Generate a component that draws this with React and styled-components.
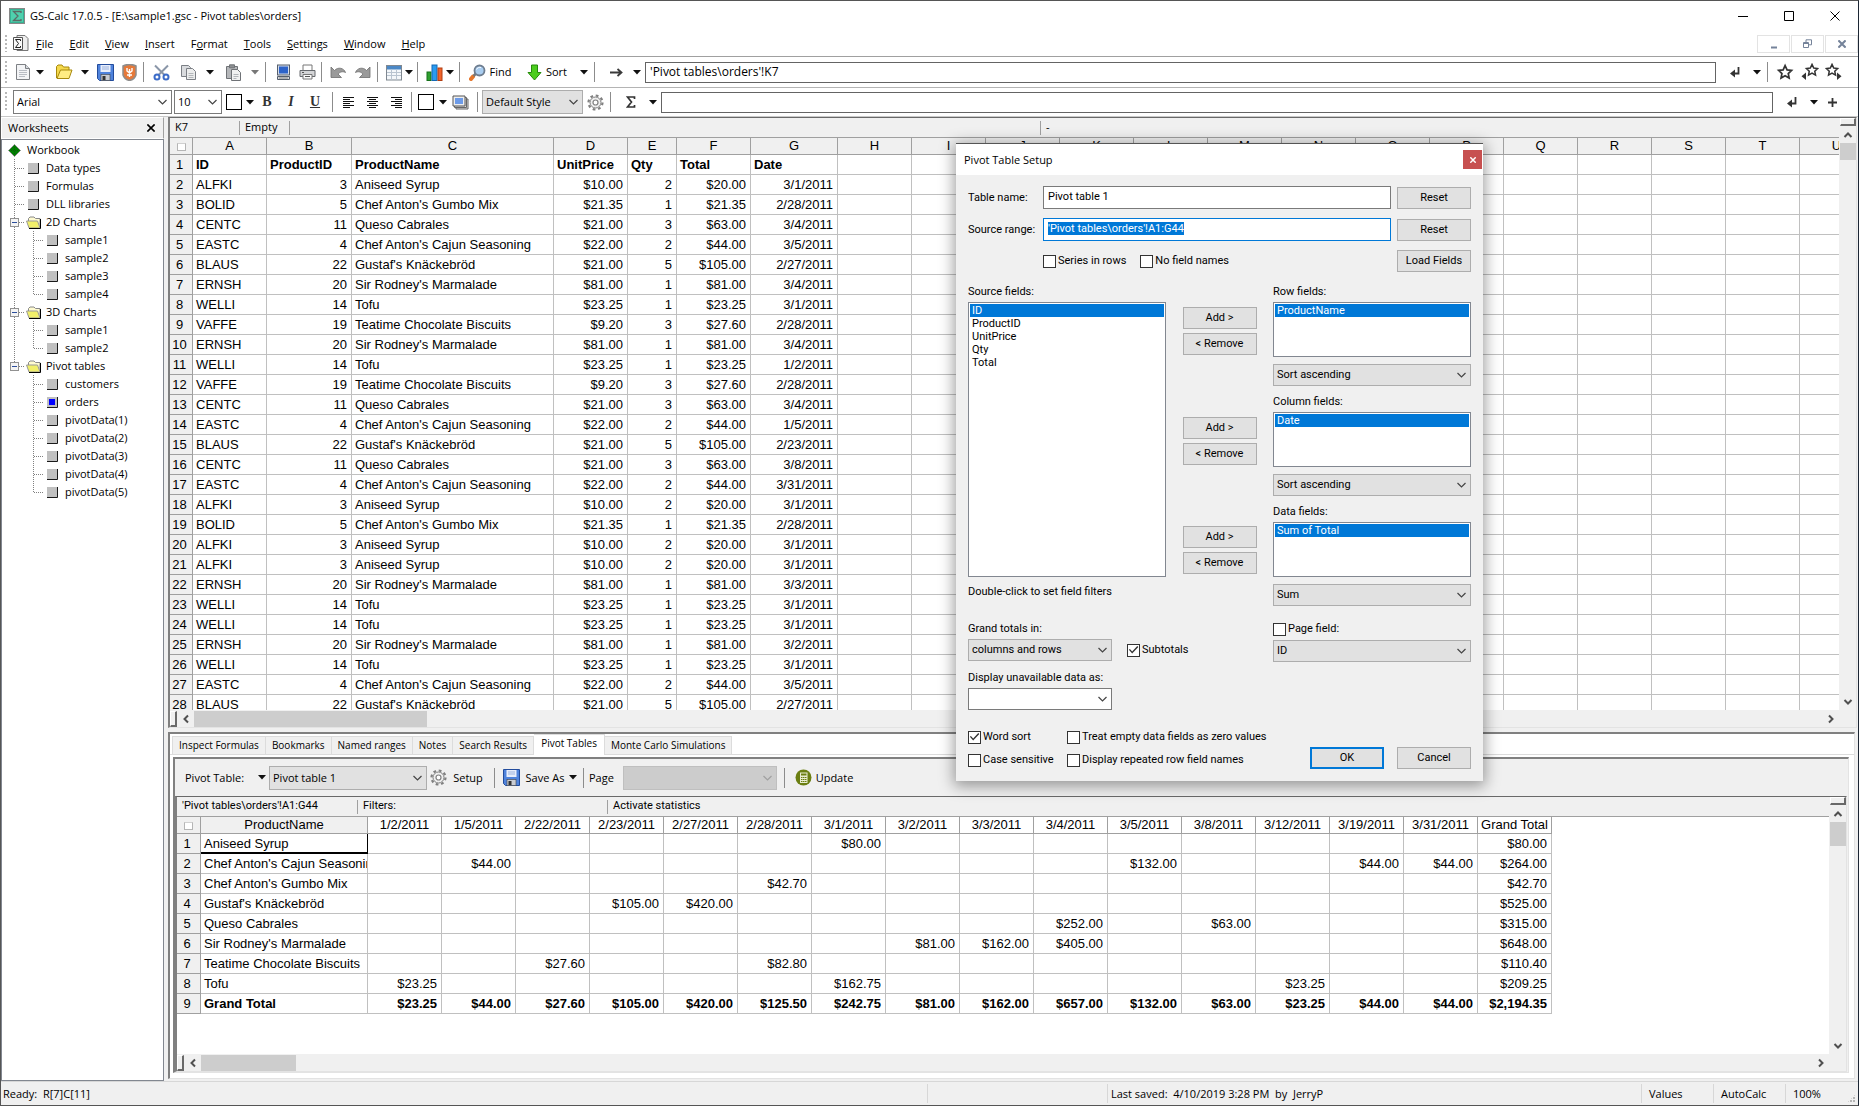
import React, { useEffect, useRef } from "react";
import styled, { createGlobalStyle, css } from "styled-components";

const face = "#f0f0f0";
const shadow = "#a0a0a0";
const dark = "#696969";
const accent = "#0078d7";
const uiFont = '"Open Sans", "Noto Sans", sans-serif';
const dialogFont = 'Roboto, "Open Sans", sans-serif';
const cellFont = '"Liberation Sans", Arial, sans-serif';

const Global = createGlobalStyle`
  *, *::before, *::after { box-sizing: border-box; }
  body { margin: 0; background: #fff; color: #000; }
  button, input, select { font: inherit; color: inherit; margin: 0; }
  svg { display: block; flex: none; }
`;

const Window = styled.div`
  position: relative;
  display: flex;
  flex-direction: column;
  height: 100vh;
  overflow: hidden;
  border: 1px solid #555;
  border-right-color: #1c2634;
  background: #fff;
  font: 11px/16px ${uiFont};
`;

/* ---------- title and menu ---------- */

const TitleBar = styled.header`
  display: flex;
  align-items: center;
  height: 30px;
  padding-left: 8px;
  flex: none;
`;
const WindowTitle = styled.h1`
  flex: 1;
  margin: 0 0 0 5px;
  font-size: 11px;
  font-weight: 400;
`;
const WindowButton = styled.button`
  display: grid;
  place-items: center;
  width: 46px;
  height: 28px;
  padding: 0;
  border: 0;
  background: none;
`;
const MenuBar = styled.nav`
  display: flex;
  align-items: center;
  height: 26px;
  flex: none;
  border-bottom: 1px solid ${shadow};
`;
const MenuIcon = styled.span`
  width: 15px;
`;
const MenuItem = styled.button`
  height: 20px;
  padding: 0 8px;
  border: 0;
  background: none;
`;
const Key = styled.u``;
const MdiButtons = styled.div`
  display: flex;
  gap: 1px;
  margin-left: auto;
`;
const MdiButton = styled.button`
  display: grid;
  place-items: center;
  width: 33px;
  height: 18px;
  padding: 0;
  border: 1px solid #e3e3e3;
  background: #fff;
`;

/* ---------- toolbars ---------- */

const Toolbar = styled.div`
  display: flex;
  align-items: center;
  flex: none;
  height: ${(p) => p.$h}px;
  padding-right: 12px;
  border-bottom: 1px solid ${(p) => (p.$soft ? "#c8c8c8" : "#b4b4b4")};
`;
const Grip = styled.span`
  align-self: stretch;
  width: 12px;
  margin: 4px 0;
  background: repeating-linear-gradient(#b8b8b8 0 2px, transparent 2px 4px) 4px 0 / 2px 100% no-repeat;
`;
const Tool = styled.button`
  display: flex;
  align-items: center;
  justify-content: center;
  gap: 4px;
  flex: none;
  width: ${(p) => p.$w}px;
  height: 22px;
  padding: 0;
  border: 0;
  background: none;
  white-space: nowrap;
`;
const Separator = styled.span`
  flex: none;
  width: ${(p) => p.$w}px;
  height: 20px;
  background: linear-gradient(#8c8c8c, #8c8c8c) center / 1px 100% no-repeat;
`;
const Bar = styled.input`
  flex: 1;
  min-width: 0;
  height: ${(p) => p.$h}px;
  margin-left: 4px;
  padding: 0 4px 2px;
  border: 1px solid #646464;
  background: #fff;
  font-size: 12px;
  outline: 0;
`;
const Letter = styled.span`
  font: bold 14px "Liberation Serif", serif;
  ${(p) => p.$italic && css`font-style: italic;`}
  ${(p) => p.$under && css`text-decoration: underline;`}
  color: #333;
`;
const Swatch = styled.span`
  width: 16px;
  height: 16px;
  border: 1px solid #000;
  background: #fff;
`;

const ComboFrame = styled.span`
  position: relative;
  display: block;
  flex: none;
  width: ${(p) => (p.$w ? `${p.$w}px` : "100%")};
  margin-right: ${(p) => p.$gap || 0}px;
  color: ${(p) => (p.$off ? "#a0a0a0" : "#444")};
  svg {
    position: absolute;
    right: 4px;
    top: 50%;
    margin-top: -3px;
    pointer-events: none;
  }
`;
const NativeSelect = styled.select`
  display: block;
  appearance: none;
  width: 100%;
  height: ${(p) => p.$h}px;
  padding: 0 16px 0 3px;
  border: 1px solid ${(p) => (p.$white ? "#7a7a7a" : p.$off ? "#bfbfbf" : "#adadad")};
  border-radius: 0;
  background: ${(p) => (p.$white ? "#fff" : p.$off ? "#ccc" : "#e1e1e1")};
  color: #000;
  opacity: 1;
`;
function Combo({ label, id, value, w, h = 22, white, off, gap }) {
  return (
    <ComboFrame $w={w} $gap={gap} $off={off}>
      <NativeSelect id={id} aria-label={label} $h={h} $white={white} $off={off} disabled={off}>
        <option>{value}</option>
      </NativeSelect>
      <svg width="11" height="7" viewBox="0 0 11 7" fill="none" stroke="currentColor">
        <path d="M1.500 1 5.500 5 9.500 1" strokeWidth="1.200" />
      </svg>
    </ComboFrame>
  );
}

/* ---------- icons ---------- */

const Triangle = ({ gray }) => (
  <svg width="8" height="5" viewBox="0 0 8 5"><path d="M0 0h8L4 4.500z" fill={gray ? "#777" : "#111"} /></svg>
);
function Drop({ w = 8, gray, label = "More" }) {
  return <Tool $w={w} aria-label={label}><Triangle gray={gray} /></Tool>;
}
const AppLogo = () => (
  <svg width="16" height="16" viewBox="0 0 16 16">
    <rect x=".5" y=".5" width="15" height="15" fill="#35b292" stroke="#888" />
    <path d="M2 2h12v12H2z" fill="#4fd0ae" />
    <path d="M12 5V3.500H4.500L9 8l-4.500 4.500H12V11" fill="none" stroke="#5c6b66" strokeWidth="1.300" />
  </svg>
);
const DocSigma = () => (
  <svg width="16" height="17" viewBox="0 0 16 17" fill="none">
    <path d="M4 .5h8l3 3v12H4z" fill="#eee" stroke="#777" />
    <path d="M.5 2.500h9v12h-9z" fill="#fafafa" stroke="#555" />
    <path d="M7.500 6V4.500h-5L5.500 8.500l-3 4h5V11" stroke="#222" />
  </svg>
);
const NewDoc = () => (
  <svg width="16" height="18" viewBox="0 0 16 18" fill="none">
    <path d="M1.500 1.500h9l4 4v11h-13z" fill="#f3f4f6" stroke="#7d8084" />
    <path d="M10.500 1.500v4h4" fill="#d5d9de" stroke="#7d8084" />
    <path d="M4 7.500h8M4 9.500h8M4 11.500h8M4 13.500h6" stroke="#b9bdc4" />
  </svg>
);
const OpenFolder = () => (
  <svg width="18" height="16" viewBox="0 0 18 16">
    <path d="M1.500 14V2.500L3 1h4l1.500 2H14v3" fill="#f5d94c" stroke="#a8890d" />
    <path d="M2 14.500 5.500 6H17l-3 8.500z" fill="#ffec83" stroke="#a8890d" />
  </svg>
);
const Floppy = () => (
  <svg width="17" height="17" viewBox="0 0 17 17">
    <path d="M.5.500h16v16h-14l-2-2z" fill="#4f83dc" stroke="#234c9c" />
    <rect x="3.500" y="1" width="10" height="7" fill="#e8eefb" />
    <path d="M5 3h7M5 5h7" stroke="#9db3dd" />
    <rect x="4" y="10.500" width="9" height="6" fill="#c9ccd2" stroke="#444" strokeWidth=".6" />
    <rect x="5.500" y="12" width="3" height="4" fill="#333" />
  </svg>
);
const Shield = () => (
  <svg width="15" height="17" viewBox="0 0 15 17">
    <path d="M1 2C5 0 10 0 14 2v9c-1 3-4 5-6.500 5.500C5 16 2 14 1 11z" fill="#e5793a" stroke="#8d8d8d" strokeWidth="1.500" />
    <path d="M5 4v3l2.500 2L10 7V4M7.500 5v8M5 11h5" stroke="#fff" strokeWidth="1.400" fill="none" />
  </svg>
);
const Scissors = () => (
  <svg width="17" height="17" viewBox="0 0 17 17" fill="none">
    <path d="M2 1.500 11.500 11M15 1.500 5.500 11" stroke="#8a96a8" strokeWidth="2" />
    <circle cx="4" cy="13" r="2.500" stroke="#3c6cc8" strokeWidth="2" />
    <circle cx="13" cy="13" r="2.500" stroke="#3c6cc8" strokeWidth="2" />
  </svg>
);
const Copy = () => (
  <svg width="17" height="17" viewBox="0 0 17 17" fill="none" stroke="#7b7f85">
    <path d="M1.500 1.500h7l2 2v9h-9z" fill="#d9dbde" />
    <path d="M6.500 4.500h6l3 3v8h-9z" fill="#eceded" />
    <path d="M8.500 9.500h5M8.500 11.500h5M8.500 13.500h5" stroke="#b3b6ba" />
  </svg>
);
const Paste = () => (
  <svg width="17" height="17" viewBox="0 0 17 17" fill="none" stroke="#6f7276">
    <path d="M1.500 2.500h11v12h-11z" fill="#b5b7ba" />
    <path d="M4.500.800h5v3h-5z" fill="#8c8f92" />
    <path d="M6.500 5.500h6l3 3v8h-9z" fill="#f1f1f1" />
    <path d="M8.500 10.500h5M8.500 12.500h5M8.500 14.500h3" stroke="#b3b6ba" />
  </svg>
);
const Monitor = () => (
  <svg width="15" height="17" viewBox="0 0 15 17">
    <rect x="1.500" y="1" width="12" height="10" fill="#d4dcea" stroke="#555e6c" />
    <rect x="3" y="2.500" width="9" height="7" fill="#2d63c9" />
    <path d="M1.500 12.500h12v3h-12z" fill="#d7d9dc" stroke="#555e6c" />
    <path d="M3 14h9" stroke="#888" />
  </svg>
);
const Printer = () => (
  <svg width="17" height="16" viewBox="0 0 17 16">
    <path d="M4 6V1h9v5" fill="#fff" stroke="#777" />
    <path d="M1 6.500h15v6H1z" fill="#d4d5d7" stroke="#66696d" />
    <path d="M4 10.500h9v4.500H4z" fill="#fafafa" stroke="#777" />
    <path d="M3 8.500h2M6 12.500h5" stroke="#555" />
  </svg>
);
const Undo = ({ flip }) => (
  <svg width="16" height="15" viewBox="0 0 16 15">
    <path transform={flip ? "translate(16 0) scale(-1 1)" : undefined} d="M1 2v10.500h10.500L8 9c2-2 4.500-3 7.500-1.500C14 3 8 1.500 4.500 5.500z" fill="#9a9a9a" stroke="#6d6d6d" strokeWidth=".8" />
  </svg>
);
const TableIcon = () => (
  <svg width="16" height="17" viewBox="0 0 16 17">
    <rect x=".5" y="1.500" width="15" height="14.500" fill="#f4f7fa" stroke="#7f8790" />
    <rect x="1" y="2" width="14" height="3.500" fill="#4b88c6" />
    <path d="M1 8.500h14M1 11.500h14M5.500 5.500V16M10.500 5.500V16" stroke="#b9c4d0" />
  </svg>
);
const ChartIcon = () => (
  <svg width="17" height="17" viewBox="0 0 17 17">
    <rect x="1" y="8" width="4" height="8.500" fill="#2fa02f" stroke="#15701a" />
    <rect x="6" y="1" width="5" height="15.500" fill="#2a9bf0" stroke="#1268b5" />
    <rect x="12" y="4" width="4" height="12.500" fill="#f0642c" stroke="#b23c10" />
  </svg>
);
const FindIcon = () => (
  <svg width="17" height="17" viewBox="0 0 17 17">
    <path d="m2 15 2-2.500" stroke="#e5762b" strokeWidth="4" strokeLinecap="round" />
    <path d="m4.500 12 2.500-2.500" stroke="#777" strokeWidth="2.500" />
    <circle cx="10.500" cy="6.500" r="5" fill="#a9cdf0" stroke="#6e7d8f" strokeWidth="1.800" />
    <path d="M7.500 5.500c1-2 3-2.500 4.500-2" stroke="#fff" fill="none" />
  </svg>
);
const SortIcon = () => (
  <svg width="15" height="17" viewBox="0 0 15 17">
    <path d="M4.500 1h6v7.500H14l-6.500 7.500L1 8.500h3.500z" fill="#4ccd1e" stroke="#258a0b" />
  </svg>
);
const GoIcon = () => (
  <svg width="14" height="9" viewBox="0 0 14 9" fill="none" stroke="#3a3a3a" strokeWidth="1.800"><path d="M1 4.500h11M8.500 1l4 3.500-4 3.500" /></svg>
);
const EnterIcon = () => (
  <svg width="10" height="11" viewBox="0 0 10 11"><path d="M8.500 0v6.500H4" fill="none" stroke="#333" strokeWidth="1.800" /><path d="M0 6.500 5 2.500v8z" fill="#333" /></svg>
);
const Star = ({ side }) => (
  <svg width="18" height="18" viewBox="0 0 18 18">
    <path
      transform={side === "left" ? "translate(4 0) scale(.78)" : side ? "scale(.78)" : "translate(1 1) scale(.9)"}
      d="M9 1.800l2.200 4.700 5 .6-3.700 3.500 1 5L9 13.100l-4.500 2.500 1-5L1.800 7.100l5-.6z"
      fill="none" stroke="#333" strokeWidth="1.900"
    />
    {side === "left" && <path d="M5 9.500v7.500L.5 13.300z" fill="#333" />}
    {side === "right" && <path d="M12 9.500v7.500l4.500-3.700z" fill="#333" />}
  </svg>
);
const AlignIcon = ({ short }) => (
  <svg width="12" height="13" viewBox="0 0 12 13" stroke="#111" shapeRendering="crispEdges">
    {[0, 1, 2, 3, 4, 5].map((i) => {
      const len = i % 2 ? 7 : 11;
      const x = short === "left" ? 0 : short === "right" ? 11 - len : (11 - len) / 2;
      return <path key={i} d={`M${x} ${i * 2 + 1.5}h${len}`} />;
    })}
  </svg>
);
const Layers = () => (
  <svg width="17" height="15" viewBox="0 0 17 15">
    <path d="M4 4h12v10H4z" fill="#ddd" stroke="#666" /><path d="M2.500 2.500h12v10h-12z" fill="#ddd" stroke="#666" />
    <path d="M1 1h12v10H1z" fill="#eee" stroke="#555" /><path d="M3 3h8v6H3z" fill="#6d9be8" />
  </svg>
);
const Gear = () => (
  <svg width="17" height="17" viewBox="0 0 17 17" fill="none" stroke="#808080">
    <circle cx="8.500" cy="8.500" r="7" strokeWidth="2.200" strokeDasharray="2.750 2.750" />
    <circle cx="8.500" cy="8.500" r="5.500" fill="#eee" />
    <circle cx="8.500" cy="8.500" r="2.500" fill="#fff" strokeWidth="1.200" />
  </svg>
);
const SigmaIcon = () => (
  <svg width="10" height="12" viewBox="0 0 10 12"><path d="M8.500 3V1H1.500l4 5-4 5h7V9" fill="none" stroke="#333" strokeWidth="1.700" /></svg>
);
const Plus = () => (
  <svg width="9" height="9" viewBox="0 0 9 9"><path d="M4.500 0v9M0 4.500h9" stroke="#333" strokeWidth="1.800" /></svg>
);
const Calculator = () => (
  <svg width="17" height="17" viewBox="0 0 17 17">
    <circle cx="8.500" cy="8.500" r="8" fill="#6b7f12" />
    <rect x="5" y="3.500" width="7.500" height="10.500" fill="#e9edd2" />
    <path d="M6 5.500h5.500" stroke="#6b7f12" strokeWidth="2" />
    <path d="M6 8.500h5.500M6 10.500h5.500M6 12.500h5.500" stroke="#6b7f12" strokeDasharray="1.500 .500" />
  </svg>
);
const CloseX = ({ size = 8, color = "#000", weight = 1.6 }) => (
  <svg width={size} height={size} viewBox="0 0 10 10"><path d="M.5.500l9 9M9.500.500l-9 9" stroke={color} strokeWidth={weight} /></svg>
);
const Diamond = () => (
  <svg width="13" height="13" viewBox="0 0 13 13"><path d="M6.500.500l6 6-6 6-6-6z" fill="#008000" stroke="#8a8a8a" /><path d="M3 6.500h7M6.500 3v7" stroke="#0a5a0a" strokeDasharray="1 1" /></svg>
);
const TreeFolder = () => (
  <svg width="16" height="13" viewBox="0 0 16 13">
    <path d="M2.500 11V2.500L4 1h4l1.500 1.500H14V11" fill="#fffbd0" stroke="#888" />
    <path d="M.5 5h11l2.500 7H3z" fill="#f1ef6a" stroke="#999" />
    <path d="M14.500 3v9.500H3" stroke="#000" fill="none" />
  </svg>
);
const Sheet = ({ on }) => (
  <svg width="11" height="11" viewBox="0 0 11 11">
    <path d="M0 0h10v10H0z" fill="#c0c0c0" /><path d="M0 10.500h10.500V0" fill="none" stroke="#000" strokeWidth=".9" />
    {on && <path d="M2 2h6v6H2z" fill="#00f" />}
  </svg>
);

/* ---------- worksheet tree ---------- */

const Body = styled.div`
  display: flex;
  flex: 1;
  min-height: 0;
  background: ${face};
`;
const Sidebar = styled.aside`
  display: flex;
  flex-direction: column;
  width: 163px;
  flex: none;
  margin-right: 4px;
`;
const SidebarHead = styled.div`
  display: flex;
  align-items: center;
  justify-content: space-between;
  height: 22px;
  padding: 0 8px 0 6px;
  border: 1px solid #fff;
  border-right-color: ${shadow};
`;
const PlainButton = styled.button`
  display: grid;
  place-items: center;
  padding: 0;
  border: 0;
  background: none;
`;
const Tree = styled.ul`
  flex: 1;
  margin: 0;
  padding: 1px 0 0 3px;
  list-style: none;
  border: 1px solid #828790;
  background: #fff;
`;
const TreeRow = styled.li`
  display: flex;
  align-items: center;
  height: 18px;
`;
const TreeIcon = styled.span`
  display: grid;
  place-items: center;
  width: 19px;
  margin-right: 3px;
`;
function Guide({ kind }) {
  const down = kind === "tee" || kind === "line" || kind === "open";
  return (
    <svg width="19" height="18" viewBox="0 0 19 18" shapeRendering="crispEdges" stroke="#808080" fill="none">
      {kind !== "none" && <path d={down ? "M9.500 0v18" : "M9.500 0v9"} strokeDasharray="1 1" />}
      {kind !== "none" && kind !== "line" && <path d="M10 9.500h9" strokeDasharray="1 1" />}
      {(kind === "open" || kind === "openEnd") && (
        <>
          <rect x="5.500" y="5.500" width="8" height="8" fill="#f4f4f4" stroke="#919191" />
          <path d="M7 9.500h5" stroke="#2b4d9b" />
        </>
      )}
    </svg>
  );
}
const tree = [
  [[], "root", "Workbook"],
  [["tee"], "sheet", "Data types"],
  [["tee"], "sheet", "Formulas"],
  [["tee"], "sheet", "DLL libraries"],
  [["open"], "folder", "2D Charts"],
  [["line", "tee"], "sheet", "sample1"],
  [["line", "tee"], "sheet", "sample2"],
  [["line", "tee"], "sheet", "sample3"],
  [["line", "end"], "sheet", "sample4"],
  [["open"], "folder", "3D Charts"],
  [["line", "tee"], "sheet", "sample1"],
  [["line", "end"], "sheet", "sample2"],
  [["openEnd"], "folder", "Pivot tables"],
  [["none", "tee"], "sheet", "customers"],
  [["none", "tee"], "active", "orders"],
  [["none", "tee"], "sheet", "pivotData(1)"],
  [["none", "tee"], "sheet", "pivotData(2)"],
  [["none", "tee"], "sheet", "pivotData(3)"],
  [["none", "tee"], "sheet", "pivotData(4)"],
  [["none", "end"], "sheet", "pivotData(5)"],
];

/* ---------- sheets ---------- */

const Main = styled.main`
  display: flex;
  flex-direction: column;
  flex: 1;
  min-width: 0;
`;
const SheetPane = styled.section`
  display: grid;
  grid-template-columns: minmax(0, 1fr) 17px;
  grid-template-rows: minmax(0, 1fr) 17px;
  flex: ${(p) => (p.$grow ? "1 1 0" : "0 0 auto")};
  min-height: 0;
  margin-right: 1px;
  border-left: 2px solid #808080;
  border-top: 1px solid ${dark};
  border-right: 1px solid #e3e3e3;
  border-bottom: 1px solid #e3e3e3;
  background: ${face};
`;
const SheetView = styled.div`
  min-height: 0;
  overflow: hidden;
  padding-bottom: ${(p) => p.$space || 0}px;
  background: #fff;
`;
const InfoRow = styled.div`
  display: flex;
  align-items: center;
  height: 20px;
  border-bottom: 1px solid ${shadow};
  background: ${face};
  font: ${(p) => (p.$small ? `11px/16px ${dialogFont}` : "inherit")};
`;
const InfoCell = styled.span`
  flex: ${(p) => (p.$w ? `0 0 ${p.$w}px` : "1")};
  height: 14px;
  padding-left: 5px;
  line-height: 12px;
  white-space: nowrap;
  border-left: ${(p) => (p.$first ? "0" : `1px solid ${shadow}`)};
`;
const Grid = styled.table`
  table-layout: fixed;
  width: ${(p) => p.$w}px;
  border-collapse: separate;
  border-spacing: 0;
  font: 13px/19px ${cellFont};
`;
const Col = styled.col`
  width: ${(p) => p.$w}px;
`;
const HeadCell = styled.th`
  height: 17px;
  padding: 0;
  overflow: hidden;
  border-right: 1px solid ${shadow};
  border-bottom: 1px solid ${shadow};
  background: ${(p) => (p.$white ? "#fff" : face)};
  font-weight: 400;
  line-height: 16px;
  white-space: nowrap;
`;
const RowHead = styled.th`
  height: 20px;
  padding: 0 3px 0 0;
  border-right: 1px solid ${shadow};
  border-bottom: 1px solid ${shadow};
  background: ${face};
  font-weight: 400;
`;
const Cell = styled.td`
  height: 20px;
  padding: 0 4px 0 3px;
  overflow: hidden;
  border-right: 1px solid #c0c0c0;
  border-bottom: 1px solid #c0c0c0;
  text-align: ${(p) => (p.$num ? "right" : "left")};
  font-weight: ${(p) => (p.$bold ? 700 : 400)};
  white-space: nowrap;
  ${(p) => p.$cursor && css`
    border-color: #000;
    box-shadow: inset 0 -1px 0 #000;
  `}
`;
const CornerBox = styled.span`
  display: block;
  width: 9px;
  height: 8px;
  margin: 1px auto 0;
  border: 1px solid #b5b5b5;
  border-top-color: #d0d0d0;
  background: #fff;
`;

const VScroll = styled.div`
  display: flex;
  flex-direction: column;
  align-items: center;
  background: ${face};
`;
const HScroll = styled.div`
  display: flex;
  align-items: center;
  background: ${face};
`;
const Splitter = styled.span`
  flex: none;
  ${(p) => (p.$v ? "width: 16px; height: 8px;" : "width: 7px; height: 16px;")}
  border: 1px solid #fff;
  border-right: 2px solid ${dark};
  border-bottom: 2px solid ${dark};
  background: ${face};
`;
const Thumb = styled.span`
  flex: none;
  ${(p) => (p.$v ? `width: 16px; height: ${p.$size}px;` : `height: 16px; width: ${p.$size}px;`)}
  background: #cdcdcd;
`;
const Arrow = styled.button`
  display: grid;
  place-items: center;
  flex: none;
  width: 17px;
  height: 17px;
  padding: 0;
  border: 0;
  background: none;
  ${(p) => p.$end && (p.$v ? "margin-top: auto;" : "margin-left: auto;")}
`;
const Chevron = ({ d }) => (
  <svg width="10" height="10" viewBox="0 0 10 10" fill="none" stroke="#505050" strokeWidth="2"><path d={d} /></svg>
);
function VBar({ thumb }) {
  return (
    <VScroll>
      <Splitter $v />
      <Arrow $v aria-label="Scroll up"><Chevron d="M1.500 7 5 3.500 8.500 7" /></Arrow>
      <Thumb $v $size={thumb} />
      <Arrow $v $end aria-label="Scroll down"><Chevron d="M1.500 3 5 6.500 8.500 3" /></Arrow>
    </VScroll>
  );
}
function HBar({ thumb }) {
  return (
    <HScroll>
      <Splitter />
      <Arrow aria-label="Scroll left"><Chevron d="M7 1.500 3.500 5 7 8.500" /></Arrow>
      <Thumb $size={thumb} />
      <Arrow $end aria-label="Scroll right"><Chevron d="M3 1.500 6.500 5 3 8.500" /></Arrow>
    </HScroll>
  );
}

const products = {
  A: ["ALFKI", 3, "Aniseed Syrup", "$10.00", 2, "$20.00"],
  G: ["BOLID", 5, "Chef Anton's Gumbo Mix", "$21.35", 1, "$21.35"],
  Q: ["CENTC", 11, "Queso Cabrales", "$21.00", 3, "$63.00"],
  C: ["EASTC", 4, "Chef Anton's Cajun Seasoning", "$22.00", 2, "$44.00"],
  K: ["BLAUS", 22, "Gustaf's Knäckebröd", "$21.00", 5, "$105.00"],
  M: ["ERNSH", 20, "Sir Rodney's Marmalade", "$81.00", 1, "$81.00"],
  T: ["WELLI", 14, "Tofu", "$23.25", 1, "$23.25"],
  B: ["VAFFE", 19, "Teatime Chocolate Biscuits", "$9.20", 3, "$27.60"],
};
const orders = "A3/1 G2/28 Q3/4 C3/5 K2/27 M3/4 T3/1 B2/28 M3/4 T1/2 B2/28 Q3/4 C1/5 K2/23 Q3/8 C3/31 A3/1 G2/28 A3/1 A3/1 M3/3 T3/1 T3/1 M3/2 T3/1 C3/5 K2/27"
  .split(" ")
  .map((o) => [...products[o[0]], `${o.slice(1)}/2011`]);
const letters = "ABCDEFGHIJKLMNOPQRSTU".split("");
const orderCols = [74, 85, 202, 74, 49, 74, 87];
const sheetCols = letters.map((_, i) => orderCols[i] || 74);
const fields = ["ID", "ProductID", "ProductName", "UnitPrice", "Qty", "Total", "Date"];
const spare = letters.slice(7);

function OrdersGrid() {
  return (
    <Grid $w={23 + sheetCols.reduce((a, b) => a + b, 0)}>
      <colgroup>
        <Col $w={23} />
        {sheetCols.map((w, i) => <Col key={i} $w={w} />)}
      </colgroup>
      <thead>
        <tr>
          <HeadCell><CornerBox /></HeadCell>
          {letters.map((l) => <HeadCell key={l}>{l}</HeadCell>)}
        </tr>
      </thead>
      <tbody>
        <tr>
          <RowHead>1</RowHead>
          {fields.map((f) => <Cell key={f} $bold>{f}</Cell>)}
          {spare.map((l) => <Cell key={l} />)}
        </tr>
        {orders.map((row, r) => (
          <tr key={r}>
            <RowHead>{r + 2}</RowHead>
            {row.map((v, c) => <Cell key={c} $num={c !== 0 && c !== 2}>{v}</Cell>)}
            {spare.map((l) => <Cell key={l} />)}
          </tr>
        ))}
      </tbody>
    </Grid>
  );
}

const dates = ["1/2", "1/5", "2/22", "2/23", "2/27", "2/28", "3/1", "3/2", "3/3", "3/4", "3/5", "3/8", "3/12", "3/19", "3/31"];
const pivot = [
  ["Aniseed Syrup", { "3/1": "$80.00" }, "$80.00"],
  ["Chef Anton's Cajun Seasoning", { "1/5": "$44.00", "3/5": "$132.00", "3/19": "$44.00", "3/31": "$44.00" }, "$264.00"],
  ["Chef Anton's Gumbo Mix", { "2/28": "$42.70" }, "$42.70"],
  ["Gustaf's Knäckebröd", { "2/23": "$105.00", "2/27": "$420.00" }, "$525.00"],
  ["Queso Cabrales", { "3/4": "$252.00", "3/8": "$63.00" }, "$315.00"],
  ["Sir Rodney's Marmalade", { "3/2": "$81.00", "3/3": "$162.00", "3/4": "$405.00" }, "$648.00"],
  ["Teatime Chocolate Biscuits", { "2/22": "$27.60", "2/28": "$82.80" }, "$110.40"],
  ["Tofu", { "1/2": "$23.25", "3/1": "$162.75", "3/12": "$23.25" }, "$209.25"],
];
const totals = ["$23.25", "$44.00", "$27.60", "$105.00", "$420.00", "$125.50", "$242.75", "$81.00", "$162.00", "$657.00", "$132.00", "$63.00", "$23.25", "$44.00", "$44.00", "$2,194.35"];

function PivotGrid() {
  return (
    <Grid $w={24 + 167 + 16 * 74}>
      <colgroup>
        <Col $w={24} />
        <Col $w={167} />
        {totals.map((_, i) => <Col key={i} $w={74} />)}
      </colgroup>
      <thead>
        <tr>
          <HeadCell><CornerBox /></HeadCell>
          <HeadCell>ProductName</HeadCell>
          {dates.map((d) => <HeadCell key={d} $white>{d}/2011</HeadCell>)}
          <HeadCell $white>Grand Total</HeadCell>
        </tr>
      </thead>
      <tbody>
        {pivot.map(([name, cells, total], r) => (
          <tr key={name}>
            <RowHead>{r + 1}</RowHead>
            <Cell $cursor={r === 0}>{name}</Cell>
            {dates.map((d) => <Cell key={d} $num>{cells[d]}</Cell>)}
            <Cell $num>{total}</Cell>
          </tr>
        ))}
        <tr>
          <RowHead>9</RowHead>
          <Cell $bold>Grand Total</Cell>
          {totals.map((t, i) => <Cell key={i} $num $bold>{t}</Cell>)}
        </tr>
      </tbody>
    </Grid>
  );
}

/* ---------- lower panel ---------- */

const LowerPanel = styled.section`
  flex: none;
  margin: 4px 3px 2px 0;
  border: 1px solid #e3e3e3;
  border-top: 2px solid #808080;
  border-left: 2px solid #808080;
  background: #fff;
`;
const Tabs = styled.div`
  display: flex;
  align-items: flex-end;
  height: 21px;
  padding-left: 2px;
  border-bottom: 1px solid #dcdcdc;
`;
const Tab = styled.button`
  height: ${(p) => (p.$on ? 21 : 18)}px;
  padding: ${(p) => (p.$on ? "0 7px 4px" : "0 6px 1px")};
  margin-bottom: ${(p) => (p.$on ? -1 : 0)}px;
  border: 1px solid #dcdcdc;
  border-bottom: 0;
  border-left-width: ${(p) => (p.$first ? 1 : 0)}px;
  background: ${(p) => (p.$on ? "#fff" : face)};
  font-size: 10px;
  white-space: nowrap;
`;
const PivotFrame = styled.div`
  margin: 2px 5px 5px 3px;
  border: 1px solid #e3e3e3;
  border-top: 2px solid #808080;
  border-left: 2px solid #808080;
  background: ${face};
`;
const PivotBar = styled.div`
  display: flex;
  align-items: center;
  height: 37px;
  padding-left: 10px;
`;
const BarLabel = styled.label`
  flex: none;
  width: ${(p) => p.$w}px;
  white-space: nowrap;
`;

const StatusBar = styled.footer`
  display: flex;
  flex: none;
  height: 24px;
  padding: 2px 0;
  border-top: 1px solid #d7d7d7;
  background: ${face};
`;
const StatusCell = styled.span`
  flex: ${(p) => (p.$w ? `0 0 ${p.$w}px` : "1")};
  padding-left: ${(p) => p.$pad || 2}px;
  border-left: ${(p) => (p.$first ? "0" : "1px solid #d7d7d7")};
  line-height: 20px;
  white-space: pre;
`;
const SizeGrip = styled.span`
  align-self: flex-end;
  width: 9px;
  height: 9px;
  margin: 0 2px 0 -11px;
  background: radial-gradient(circle at 1px 1px, #b5b5b5 1px, transparent 1px) 0 0 / 3px 3px;
  clip-path: polygon(100% 0, 100% 100%, 0 100%);
`;

/* ---------- dialog ---------- */

const Dialog = styled.div`
  position: absolute;
  left: 955px;
  top: 142px;
  width: 527px;
  border-top: 1px solid #555;
  background: ${face};
  box-shadow: 0 3px 14px 2px rgba(0, 0, 0, 0.38);
  font: 11px/16px ${dialogFont};
`;
const DialogHead = styled.div`
  display: flex;
  align-items: center;
  justify-content: space-between;
  height: 31px;
  padding: 0 1px 0 8px;
  background: #fff;
`;
const DialogTitle = styled.h2`
  margin: 0;
  font: 11px/16px ${uiFont};
`;
const DialogClose = styled.button`
  display: grid;
  place-items: center;
  width: 19px;
  height: 19px;
  padding: 0;
  border: 0;
  background: #c75050;
`;
const DialogBody = styled.form`
  padding: 11px 12px 12px;
`;
const Fields = styled.div`
  display: grid;
  grid-template-columns: 75px 1fr 6px 74px;
  row-gap: 9px;
  align-items: center;
`;
const TextBox = styled.input`
  width: 100%;
  height: 23px;
  padding: 0 4px 3px;
  border: 1px solid ${(p) => (p.$focus ? accent : "#7a7a7a")};
  background: #fff;
  outline: 0;
  &::selection { background: ${accent}; color: #fff; }
`;
const PushButton = styled.button`
  grid-column: ${(p) => (p.$last ? "4" : "auto")};
  width: 74px;
  height: 22px;
  padding: 0;
  border: ${(p) => (p.$primary ? `2px solid ${accent}` : "1px solid #adadad")};
  background: #e1e1e1;
  white-space: nowrap;
`;
const Checks = styled.div`
  display: flex;
  gap: 14px;
  grid-column: 2;
`;
const CheckLabel = styled.label`
  display: flex;
  align-items: center;
  gap: 2px;
  height: 18px;
  white-space: nowrap;
`;
const CheckBox = styled.input`
  appearance: none;
  flex: none;
  width: 13px;
  height: 13px;
  border: 1px solid #333;
  background: #fff;
  &:checked::before {
    content: "";
    display: block;
    width: 11px;
    height: 11px;
    background: #333;
    clip-path: polygon(8% 48%, 17% 40%, 38% 64%, 84% 14%, 94% 23%, 38% 82%);
  }
`;
function Check({ children, checked }) {
  return <CheckLabel><CheckBox type="checkbox" defaultChecked={checked} />{children}</CheckLabel>;
}
const Columns = styled.div`
  display: flex;
  margin-top: 12px;
`;
const LeftSide = styled.div`
  flex: 1;
`;
const RightSide = styled.div`
  display: flex;
  flex-direction: column;
  gap: 8px;
  width: 198px;
`;
const SourceRow = styled.div`
  display: flex;
`;
const SourceCol = styled.div`
  width: 198px;
`;
const Pairs = styled.div`
  display: flex;
  flex: 1;
  flex-direction: column;
  align-items: center;
  justify-content: space-between;
  padding: 23px 0 3px;
`;
const Pair = styled.div`
  display: grid;
  gap: 4px;
`;
const FieldLabel = styled.label`
  display: block;
  height: 18px;
`;
const ListBox = styled.ul`
  height: ${(p) => p.$h}px;
  margin: 0 0 ${(p) => p.$gap || 0}px;
  padding: 1px;
  list-style: none;
  border: 1px solid #828790;
  background: #fff;
`;
const ListItem = styled.li`
  height: 13px;
  padding-left: 2px;
  line-height: 13px;
  background: ${(p) => (p.$on ? accent : "transparent")};
  color: ${(p) => (p.$on ? "#fff" : "#000")};
`;
const Hint = styled.p`
  margin: 7px 0 21px;
`;
const TotalsRow = styled.div`
  display: flex;
  align-items: center;
  gap: 15px;
  margin-bottom: 9px;
`;
const PageField = styled.div`
  display: grid;
  gap: 2px;
  padding-top: 6px;
`;
const DialogFoot = styled.div`
  display: flex;
  align-items: flex-end;
  gap: 13px;
  margin-top: 18px;
`;
const Options = styled.div`
  display: grid;
  grid-template-columns: 99px auto;
  row-gap: 5px;
  margin-right: auto;
`;

function FieldGroup({ title, item, combo, id }) {
  return (
    <div>
      <FieldLabel as="span" id={`${id}-title`}>{title}</FieldLabel>
      <ListBox $h={55} $gap={7} role="listbox" aria-labelledby={`${id}-title`}>
        <ListItem $on role="option" aria-selected="true">{item}</ListItem>
      </ListBox>
      <Combo label={`${title} option`} value={combo} />
    </div>
  );
}

function PivotDialog() {
  const range = useRef(null);
  useEffect(() => {
    range.current.focus();
    range.current.select();
  }, []);
  return (
    <Dialog role="dialog" aria-labelledby="dialog-title">
      <DialogHead>
        <DialogTitle id="dialog-title">Pivot Table Setup</DialogTitle>
        <DialogClose aria-label="Close"><CloseX size={6} color="#fff" weight={2.4} /></DialogClose>
      </DialogHead>
      <DialogBody onSubmit={(e) => e.preventDefault()}>
        <Fields>
          <label htmlFor="table-name">Table name:</label>
          <TextBox id="table-name" defaultValue="Pivot table 1" />
          <PushButton $last type="button">Reset</PushButton>
          <label htmlFor="source-range">Source range:</label>
          <TextBox ref={range} $focus id="source-range" defaultValue="'Pivot tables\orders'!A1:G44" />
          <PushButton $last type="button">Reset</PushButton>
          <Checks>
            <Check>Series in rows</Check>
            <Check>No field names</Check>
          </Checks>
          <PushButton $last type="button">Load Fields</PushButton>
        </Fields>
        <Columns>
          <LeftSide>
            <SourceRow>
              <SourceCol>
                <FieldLabel as="span" id="source-title">Source fields:</FieldLabel>
                <ListBox $h={275} role="listbox" aria-labelledby="source-title">
                  {["ID", "ProductID", "UnitPrice", "Qty", "Total"].map((f, i) => (
                    <ListItem key={f} $on={i === 0} role="option" aria-selected={i === 0}>{f}</ListItem>
                  ))}
                </ListBox>
              </SourceCol>
              <Pairs>
                {["row", "column", "data"].map((k) => (
                  <Pair key={k}>
                    <PushButton type="button">Add &gt;</PushButton>
                    <PushButton type="button">&lt; Remove</PushButton>
                  </Pair>
                ))}
              </Pairs>
            </SourceRow>
            <Hint>Double-click to set field filters</Hint>
            <FieldLabel htmlFor="grand-totals">Grand totals in:</FieldLabel>
            <TotalsRow>
              <Combo id="grand-totals" value="columns and rows" w={144} />
              <Check checked>Subtotals</Check>
            </TotalsRow>
            <FieldLabel htmlFor="unavailable">Display unavailable data as:</FieldLabel>
            <Combo id="unavailable" value="" w={144} white />
          </LeftSide>
          <RightSide>
            <FieldGroup id="rows" title="Row fields:" item="ProductName" combo="Sort ascending" />
            <FieldGroup id="columns" title="Column fields:" item="Date" combo="Sort ascending" />
            <FieldGroup id="data" title="Data fields:" item="Sum of Total" combo="Sum" />
            <PageField>
              <Check>Page field:</Check>
              <Combo label="Page field" value="ID" />
            </PageField>
          </RightSide>
        </Columns>
        <DialogFoot>
          <Options>
            <Check checked>Word sort</Check>
            <Check>Treat empty data fields as zero values</Check>
            <Check>Case sensitive</Check>
            <Check>Display repeated row field names</Check>
          </Options>
          <PushButton $primary>OK</PushButton>
          <PushButton type="button">Cancel</PushButton>
        </DialogFoot>
      </DialogBody>
    </Dialog>
  );
}

/* ---------- application ---------- */

const menus = [["", "F", "ile"], ["", "E", "dit"], ["", "V", "iew"], ["", "I", "nsert"], ["F", "o", "rmat"], ["", "T", "ools"], ["", "S", "ettings"], ["", "W", "indow"], ["", "H", "elp"]];

export default function App() {
  return (
    <Window>
      <Global />
      <TitleBar>
        <AppLogo />
        <WindowTitle>GS-Calc 17.0.5 - [E:\sample1.gsc - Pivot tables\orders]</WindowTitle>
        <WindowButton aria-label="Minimize"><svg width="10" height="10" viewBox="0 0 10 10"><path d="M0 5.500h10" stroke="#000" /></svg></WindowButton>
        <WindowButton aria-label="Maximize"><svg width="10" height="10" viewBox="0 0 10 10"><path d="M.5.500h9v9h-9z" fill="none" stroke="#000" /></svg></WindowButton>
        <WindowButton aria-label="Close"><CloseX size={10} weight={1} /></WindowButton>
      </TitleBar>
      <MenuBar>
        <Grip />
        <MenuIcon><DocSigma /></MenuIcon>
        {menus.map(([a, k, b]) => <MenuItem key={k}>{a}<Key>{k}</Key>{b}</MenuItem>)}
        <MdiButtons>
          <MdiButton aria-label="Minimize sheet"><svg width="10" height="10" viewBox="0 0 10 10"><path d="M2 8.500h6" stroke="#75839a" strokeWidth="2" /></svg></MdiButton>
          <MdiButton aria-label="Restore sheet"><svg width="9" height="9" viewBox="0 0 9 9" fill="none" stroke="#75839a"><path d="M3 3V.800h5.500v5H6M.5 3.500h5v5h-5zM.5 4.500h5" /></svg></MdiButton>
          <MdiButton aria-label="Close sheet"><CloseX size={8} color="#75839a" weight={2.6} /></MdiButton>
        </MdiButtons>
      </MenuBar>
      <Toolbar $h={31}>
        <Grip />
        <Tool $w={20} aria-label="New"><NewDoc /></Tool>
        <Drop w={14} />
        <Tool $w={34} aria-label="Open"><OpenFolder /></Tool>
        <Drop />
        <Tool $w={32} aria-label="Save"><Floppy /></Tool>
        <Tool $w={16} aria-label="Protect"><Shield /></Tool>
        <Separator $w={12} />
        <Tool $w={24} aria-label="Cut"><Scissors /></Tool>
        <Tool $w={31} aria-label="Copy"><Copy /></Tool>
        <Drop w={12} />
        <Tool $w={35} aria-label="Paste"><Paste /></Tool>
        <Drop gray />
        <Separator $w={13} />
        <Tool $w={22} aria-label="Preview"><Monitor /></Tool>
        <Tool $w={26} aria-label="Print"><Printer /></Tool>
        <Separator $w={2} />
        <Tool $w={32} aria-label="Undo"><Undo /></Tool>
        <Tool $w={18} aria-label="Redo"><Undo flip /></Tool>
        <Separator $w={10} />
        <Tool $w={23} aria-label="Insert table"><TableIcon /></Tool>
        <Drop />
        <Separator $w={9} />
        <Tool $w={24} aria-label="Insert chart"><ChartIcon /></Tool>
        <Drop />
        <Separator $w={10} />
        <Tool $w={52}><FindIcon />Find</Tool>
        <Tool $w={62}><SortIcon />Sort</Tool>
        <Drop w={12} />
        <Separator $w={8} />
        <Tool $w={35} aria-label="Go to"><GoIcon /></Tool>
        <Drop />
        <Bar $h={21} aria-label="Address" defaultValue="'Pivot tables\orders'!K7" />
        <Tool $w={37} aria-label="Enter address"><EnterIcon /></Tool>
        <Drop />
        <Separator $w={12} />
        <Tool $w={24} aria-label="Add bookmark"><Star /></Tool>
        <Tool $w={25} aria-label="Previous bookmark"><Star side="left" /></Tool>
        <Tool $w={24} aria-label="Next bookmark"><Star side="right" /></Tool>
      </Toolbar>
      <Toolbar $h={29} $soft>
        <Grip />
        <Combo label="Font" value="Arial" w={159} h={24} white gap={2} />
        <Combo label="Font size" value="10" w={48} h={24} white />
        <Tool $w={24} aria-label="Text color"><Swatch /></Tool>
        <Drop />
        <Tool $w={26} aria-label="Bold"><Letter>B</Letter></Tool>
        <Tool $w={22} aria-label="Italic"><Letter $italic>I</Letter></Tool>
        <Tool $w={26} aria-label="Underline"><Letter $under>U</Letter></Tool>
        <Separator $w={9} />
        <Tool $w={24} aria-label="Align left"><AlignIcon short="left" /></Tool>
        <Tool $w={24} aria-label="Align center"><AlignIcon /></Tool>
        <Tool $w={24} aria-label="Align right"><AlignIcon short="right" /></Tool>
        <Separator $w={4} />
        <Tool $w={26} aria-label="Fill color"><Swatch /></Tool>
        <Drop />
        <Tool $w={26} aria-label="Images"><Layers /></Tool>
        <Separator $w={9} />
        <Combo label="Cell style" value="Default Style" w={101} h={24} />
        <Tool $w={24} aria-label="Style settings"><Gear /></Tool>
        <Separator $w={6} />
        <Tool $w={36} aria-label="Sum"><SigmaIcon /></Tool>
        <Drop />
        <Bar $h={21} aria-label="Formula" />
        <Tool $w={37} aria-label="Enter formula"><EnterIcon /></Tool>
        <Drop />
        <Tool $w={28} aria-label="Expand"><Plus /></Tool>
      </Toolbar>
      <Body>
        <Sidebar>
          <SidebarHead>
            Worksheets
            <PlainButton aria-label="Close worksheets"><CloseX size={8} weight={2} /></PlainButton>
          </SidebarHead>
          <Tree>
            {tree.map(([guides, kind, label], i) => (
              <TreeRow key={i}>
                {guides.map((g, j) => <Guide key={j} kind={g} />)}
                <TreeIcon>
                  {kind === "root" ? <Diamond /> : kind === "folder" ? <TreeFolder /> : <Sheet on={kind === "active"} />}
                </TreeIcon>
                {label}
              </TreeRow>
            ))}
          </Tree>
        </Sidebar>
        <Main>
          <SheetPane $grow>
            <SheetView>
              <InfoRow>
                <InfoCell $first $w={69}>K7</InfoCell>
                <InfoCell $w={50}>Empty</InfoCell>
                <InfoCell $w={751} />
                <InfoCell>-</InfoCell>
              </InfoRow>
              <OrdersGrid />
            </SheetView>
            <VBar thumb={17} />
            <HBar thumb={233} />
          </SheetPane>
          <LowerPanel>
            <Tabs role="tablist">
              {["Inspect Formulas", "Bookmarks", "Named ranges", "Notes", "Search Results", "Pivot Tables", "Monte Carlo Simulations"].map((t, i) => (
                <Tab key={t} role="tab" aria-selected={i === 5} $on={i === 5} $first={i === 0}>{t}</Tab>
              ))}
            </Tabs>
            <PivotFrame>
              <PivotBar>
                <BarLabel $w={70} htmlFor="pivot-table">Pivot Table:</BarLabel>
                <Drop w={14} />
                <Combo id="pivot-table" value="Pivot table 1" w={158} h={24} />
                <Tool $w={22} aria-label="Settings"><Gear /></Tool>
                <Tool $w={38}>Setup</Tool>
                <Separator $w={14} />
                <Tool $w={20} aria-label="Save"><Floppy /></Tool>
                <Tool $w={48}>Save As</Tool>
                <Drop />
                <Separator $w={12} />
                <BarLabel $w={34} htmlFor="pivot-page">Page</BarLabel>
                <Combo id="pivot-page" value="" w={154} h={24} off />
                <Separator $w={14} />
                <Tool $w={66}><Calculator />Update</Tool>
              </PivotBar>
              <SheetPane>
                <SheetView $space={40}>
                  <InfoRow $small>
                    <InfoCell $first $w={180}>'Pivot tables\orders'!A1:G44</InfoCell>
                    <InfoCell $w={250}>Filters:</InfoCell>
                    <InfoCell>Activate statistics</InfoCell>
                  </InfoRow>
                  <PivotGrid />
                </SheetView>
                <VBar thumb={24} />
                <HBar thumb={95} />
              </SheetPane>
            </PivotFrame>
          </LowerPanel>
        </Main>
      </Body>
      <StatusBar>
        <StatusCell $first>{"Ready:  R[7]C[11]"}</StatusCell>
        <StatusCell $w={180} />
        <StatusCell $w={534} $pad={3}>{"Last saved:  4/10/2019 3:28 PM  by  JerryP"}</StatusCell>
        <StatusCell $w={72} $pad={7}>Values</StatusCell>
        <StatusCell $w={72} $pad={7}>AutoCalc</StatusCell>
        <StatusCell $w={73} $pad={7}>100%</StatusCell>
        <SizeGrip />
      </StatusBar>
      <PivotDialog />
    </Window>
  );
}
